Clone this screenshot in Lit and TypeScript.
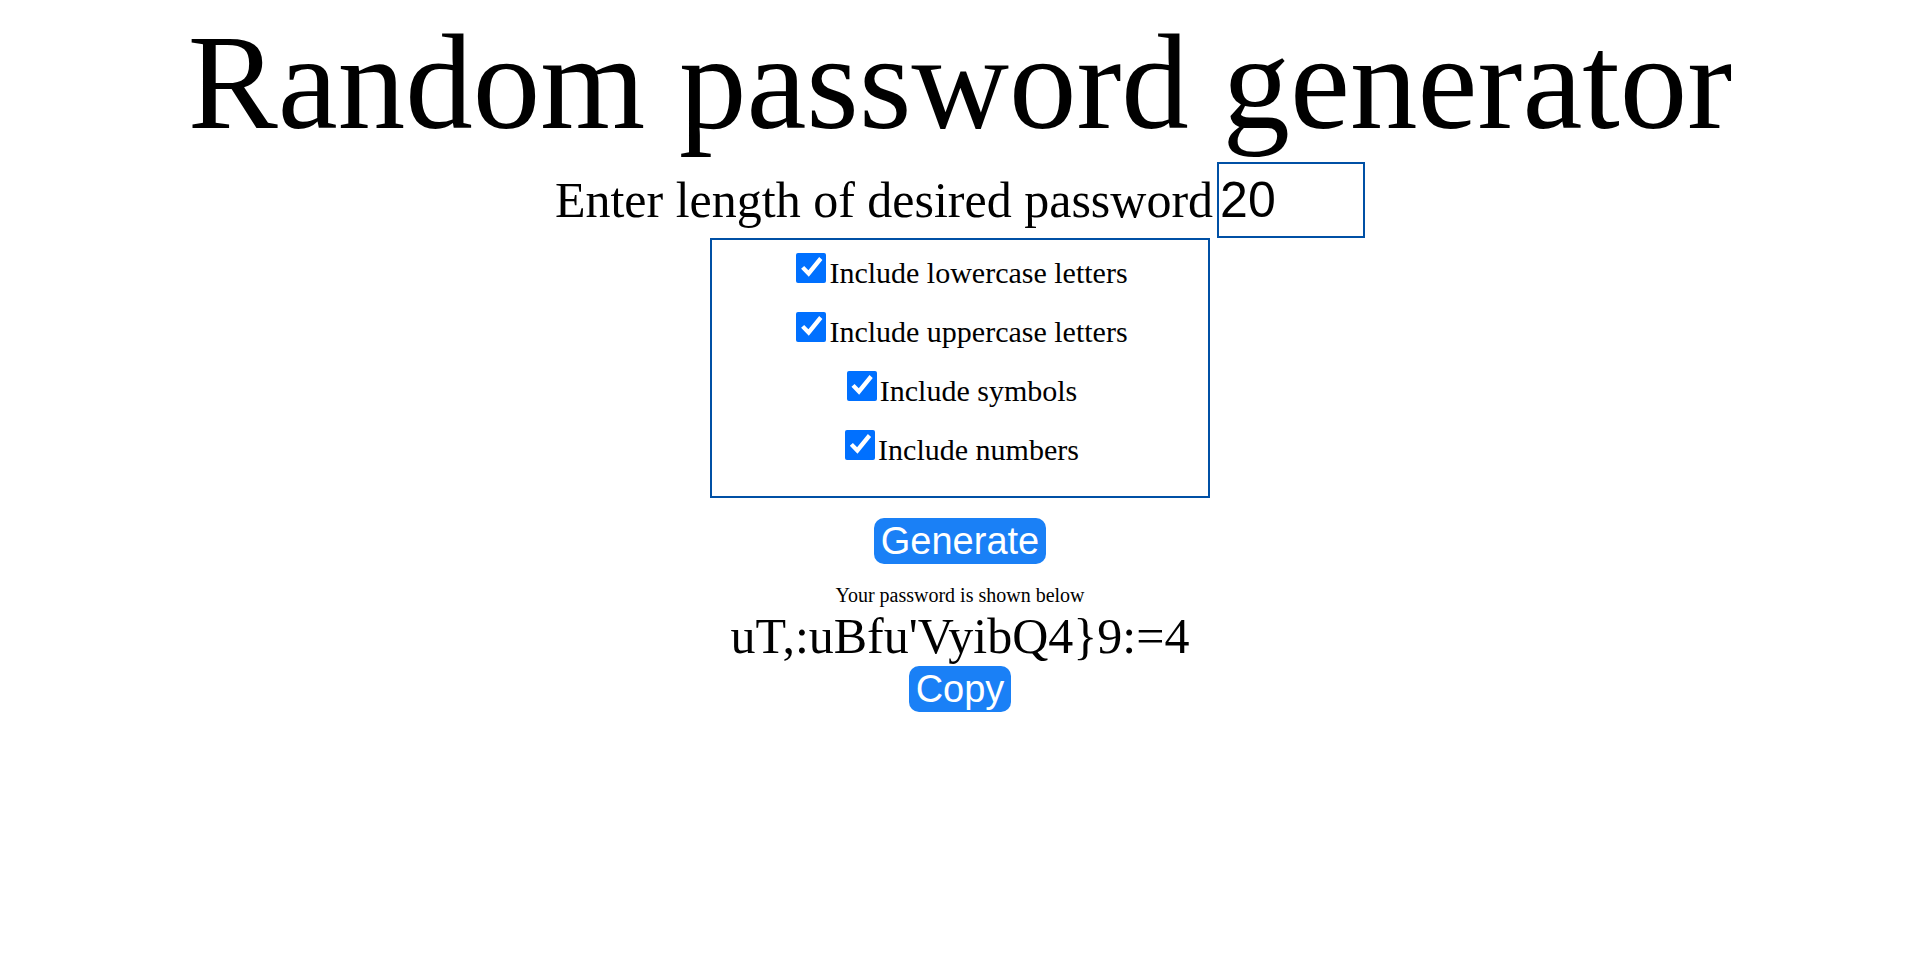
import { LitElement, html, css } from "lit";
import { customElement, state } from "lit/decorators.js";

const OPTIONS = ["lowercase letters", "uppercase letters", "symbols", "numbers"];

@customElement("app-root")
export class AppRoot extends LitElement {
  static styles = css`
    :host {
      display: block;
      padding: 8px;
      background: #fff;
      color: #000;
      font-family: "Liberation Serif", "Times New Roman", serif;
      text-align: center;
    }
    h1 {
      margin: 0 0 5px;
      font-size: 135px;
      line-height: 149px;
      font-weight: 400;
    }
    .length {
      display: flex;
      justify-content: center;
      align-items: center;
      gap: 4px;
      font-size: 50px;
      line-height: 58px;
    }
    .length input {
      box-sizing: border-box;
      width: 148px;
      height: 76px;
      padding: 1px;
      border: 2px solid #0050a5;
      font: 50px "Liberation Sans", Arial, sans-serif;
      color: #000;
    }
    .options {
      box-sizing: border-box;
      width: 500px;
      max-width: 100%;
      margin: 0 auto 20px;
      padding: 3px 0 17px;
      border: 2px solid #0050a5;
      font-size: 30px;
    }
    .option {
      display: flex;
      justify-content: center;
      align-items: center;
      gap: 3px;
      height: 59px;
    }
    .option input {
      appearance: none;
      width: 30px;
      height: 30px;
      margin: 0 0 10px 4px;
      border-radius: 2px;
      box-shadow: inset 0 0 0 2px #767676;
    }
    .option input:checked {
      background: #0070ff;
      box-shadow: none;
    }
    .option input:checked::before {
      content: "";
      display: block;
      width: 30px;
      height: 30px;
      background: #fff;
      clip-path: path("M4.7 16.3 L7.8 13.4 L12 17.8 L22.8 4.4 L26 7.4 L12.4 24.2 Z");
    }
    button {
      padding: 1px 7px;
      border: 0;
      border-radius: 10px;
      background: #1a80f6;
      color: #fff;
      font: 38px/44px "Liberation Sans", Arial, sans-serif;
      vertical-align: top;
    }
    .caption {
      margin: 20px 0 0;
      font-size: 20px;
      line-height: 23px;
    }
    .password {
      margin: 0;
      font-size: 50px;
      line-height: 59px;
    }
  `;

  @state() private password = "uT,:uBfu'VyibQ4}9:=4";

  render() {
    return html`
      <h1>Random password generator</h1>
      <div class="length">
        <label for="length">Enter length of desired password</label>
        <input id="length" type="number" value="20" />
      </div>
      <div class="options">
        ${OPTIONS.map(
          (name, i) => html`
            <div class="option">
              <input id="option-${i}" type="checkbox" checked />
              <label for="option-${i}">Include ${name}</label>
            </div>
          `
        )}
      </div>
      <button type="button">Generate</button>
      <p class="caption">Your password is shown below</p>
      <p class="password">${this.password}</p>
      <button type="button">Copy</button>
    `;
  }
}
